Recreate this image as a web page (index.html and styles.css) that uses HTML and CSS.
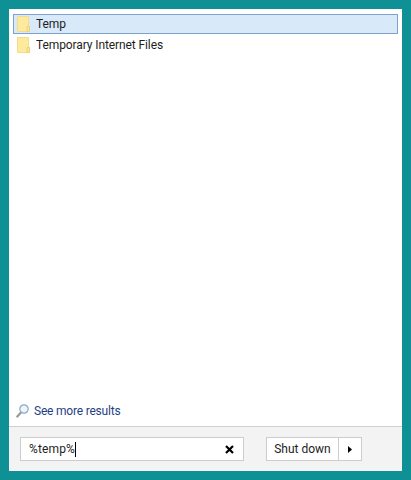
FILE: index.html
```html
<!DOCTYPE html>
<html lang="en">
<head>
<meta charset="utf-8">
<title>Start search</title>
<link rel="stylesheet" href="styles.css">
</head>
<body>
<main class="panel">
  <section class="results">
    <ul class="list">
      <li class="row row-selected">
        <svg class="folder" width="13" height="16" viewBox="0 0 13 16"><path d="M.5.5h11v10h1v5H.5z" fill="#feea9c" stroke="#f2dc90"/><path d="M10 10.500h2.500v5H10z" fill="#fde693" stroke="#ecd27c"/></svg>
        <span>Temp</span>
      </li>
      <li class="row">
        <svg class="folder" width="13" height="16" viewBox="0 0 13 16"><path d="M.5.5h11v10h1v5H.5z" fill="#feea9c" stroke="#f2dc90"/><path d="M10 10.500h2.500v5H10z" fill="#fde693" stroke="#ecd27c"/></svg>
        <span>Temporary Internet Files</span>
      </li>
    </ul>
    <a class="more">
      <svg class="lens" width="13" height="14" viewBox="0 0 13 14"><path d="M5 8.500 1.300 12.500" stroke="#9a9a90" stroke-width="2.200" stroke-linecap="round"/><circle cx="8" cy="5" r="4.200" fill="#eef5fc" stroke="#8aa8c8" stroke-width="1.200"/></svg>
      <span>See more results</span>
    </a>
  </section>
  <footer class="footer">
    <div class="search">
      <span class="query">%temp%</span><span class="caret"></span>
      <svg class="clear" width="9" height="9" viewBox="0 0 9 9"><path d="M1 1l7 7M8 1L1 8" stroke="#000" stroke-width="2.200"/></svg>
    </div>
    <div class="power">
      <span class="power-label">Shut down</span>
      <span class="power-arrow"><svg width="4" height="7" viewBox="0 0 4 7"><path d="M0 0l4 3.500L0 7z" fill="#000"/></svg></span>
    </div>
  </footer>
</main>
</body>
</html>
```
FILE: styles.css
```css
* { box-sizing: border-box; }
html, body { height: 100%; }
body {
  margin: 0;
  padding: 9px;
  background: #0f9095;
  font-family: Roboto, "Noto Sans", sans-serif;
  font-size: 12px;
  color: #1e1e1e;
  overflow: hidden;
}
.panel {
  height: 462px;
  display: flex;
  flex-direction: column;
  background: #fff;
}
.results {
  flex: 1;
  display: flex;
  flex-direction: column;
  padding: 5px 4px 0;
}
.list {
  flex: 1;
  list-style: none;
  margin: 0;
  padding: 0;
  display: flex;
  flex-direction: column;
  gap: 1px;
  letter-spacing: -0.1px;
}
.row {
  height: 20px;
  display: flex;
  align-items: center;
  gap: 6px;
  padding: 0 3px;
  border: 1px solid transparent;
}
.row-selected {
  background: #d8e9f9;
  border-color: #7da2ce;
}
.folder { flex: none; }
.more {
  height: 27px;
  display: flex;
  align-items: center;
  gap: 5px;
  padding: 0 0 3px 3px;
  color: #1f3f85;
  letter-spacing: -0.2px;
}
.lens { flex: none; }
.footer {
  height: 45px;
  flex: none;
  display: flex;
  align-items: flex-start;
  gap: 22px;
  padding: 10px 11px 0;
  background: #f3f3f3;
  border-top: 1px solid #cfcfcf;
}
.search {
  width: 224px;
  height: 24px;
  display: flex;
  align-items: center;
  padding: 0 9px 0 8px;
  background: #fff;
  border: 1px solid #cdcdcd;
}
.query { letter-spacing: 0.15px; }
.caret {
  width: 1px;
  height: 15px;
  background: #000;
}
.clear { margin-left: auto; }
.power {
  width: 96px;
  height: 24px;
  display: flex;
  background: #fff;
  border: 1px solid #cdcdcd;
}
.power-label {
  flex: 1;
  display: flex;
  align-items: center;
  justify-content: center;
  border-right: 1px solid #cdcdcd;
}
.power-arrow {
  width: 22px;
  display: flex;
  align-items: center;
  justify-content: center;
}
```
